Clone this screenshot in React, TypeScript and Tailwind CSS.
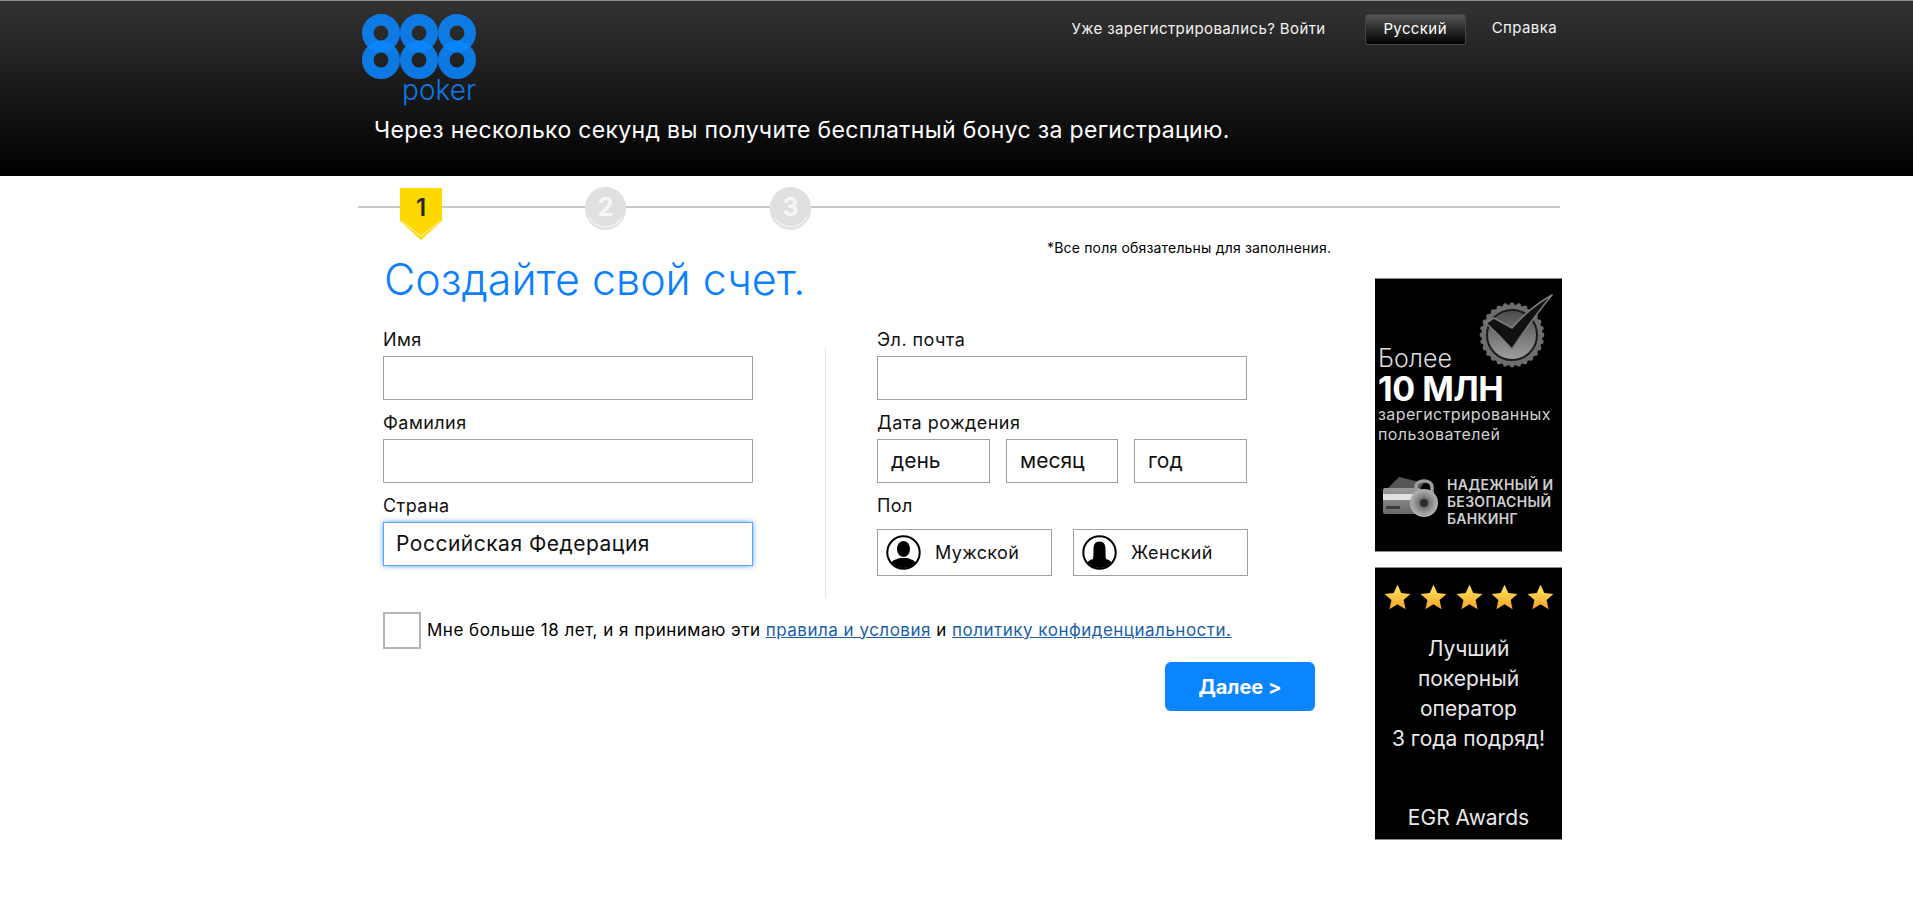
import type { ReactNode } from 'react'

function Logo() {
  const cols = [19, 57, 95]
  return (
    <div className="w-[114px] pt-[13px]">
      <svg width="114" height="65" viewBox="0 0 114 65" className="block">
        {[46, 19].map(cy => cols.map(cx => (
          <circle key={`${cx}-${cy}`} cx={cx} cy={cy} r="13.2" fill="none" stroke="#0a86ff" strokeOpacity="0.88" strokeWidth="11.6" />
        )))}
      </svg>
      <div className="-mt-[3px] text-right text-[28px] leading-[28px] font-light text-[#0b78e6]">poker</div>
    </div>
  )
}

function StepBadge() {
  return (
    <div className="relative w-[42px] h-[53px] flex justify-center pt-[6px] text-[24px] leading-[28px] font-semibold text-[#2a2a2a]">
      <svg width="42" height="53" viewBox="0 0 42 53" className="absolute left-0 top-0">
        <polygon points="0,0 42,0 42,33 21,52 0,33" fill="#ffd800" />
        <polyline points="1,33 21,48 41,33" fill="none" stroke="#ffec80" strokeWidth="1.4" />
      </svg>
      <span className="relative">1</span>
    </div>
  )
}

function StepCircle({ n }: { n: number }) {
  return (
    <div className="relative -mt-[1px] w-[41px] h-[43px] flex justify-center pt-[5px] text-[25px] leading-[30px] font-bold text-[#f6f6f6]">
      <svg width="41" height="43" viewBox="0 0 41 43" className="absolute left-0 top-0">
        <circle cx="20.5" cy="22.5" r="20.5" fill="#e4e4e4" />
        <circle cx="20.5" cy="20.5" r="20.5" fill="#e0e0e0" />
        <path d="M4 30 A19 19 0 0 0 37 30" fill="none" stroke="#f6f6f6" strokeWidth="1.2" />
      </svg>
      <span className="relative">{n}</span>
    </div>
  )
}

function Field({ label, children }: { label: string; children: ReactNode }) {
  return (
    <div className="mb-[10px]">
      <div className="h-[24px] mb-[5px] text-[18px] leading-[26px] tracking-[0.45px] text-[#111]">{label}</div>
      {children}
    </div>
  )
}

function TextInput() {
  return <input type="text" className="block w-[370px] h-[44px] border border-[#a0a0a0] bg-white outline-none" />
}

function DateBox({ w, text }: { w: string; text: string }) {
  return (
    <div className={`${w} h-[44px] border border-[#a0a0a0] pl-[13px] text-[21px] leading-[42px] text-[#111]`}>{text}</div>
  )
}

function Avatar({ female }: { female?: boolean }) {
  return (
    <svg width="35" height="35" viewBox="0 0 35 35" className="shrink-0">
      <defs>
        <clipPath id={female ? 'clipF' : 'clipM'}><circle cx="17.5" cy="17.5" r="15.5" /></clipPath>
      </defs>
      <circle cx="17.5" cy="17.5" r="16.2" fill="#fff" stroke="#000" strokeWidth="2" />
      <g clipPath={`url(#${female ? 'clipF' : 'clipM'})`}>
        <path d="M3 35 C3 26 9 24.5 14 23 L21 23 C26 24.5 32 26 32 35 Z" fill="#000" />
        {female
          ? <path d="M17.5 6.5 C13 6.5 11.5 10 11.5 14 C11.5 18 11.5 21 11 24 L24 24 C23.5 21 23.5 18 23.5 14 C23.5 10 22 6.5 17.5 6.5 Z" fill="#000" />
          : <ellipse cx="17.5" cy="14" rx="6.5" ry="8" fill="#000" />}
      </g>
    </svg>
  )
}

function GenderBox({ label, female }: { label: string; female?: boolean }) {
  return (
    <div className="w-[175px] h-[47px] border border-[#a0a0a0] flex items-center pl-[8px] gap-[14px] text-[18px] tracking-[0.35px] text-[#111]">
      <Avatar female={female} />
      <span>{label}</span>
    </div>
  )
}

function SealCheck() {
  const teeth = Array.from({ length: 28 }, (_, i) => {
    const a = (i / 28) * Math.PI * 2
    return <circle key={i} cx={33 + Math.cos(a) * 30} cy={43 + Math.sin(a) * 30} r="2.4" fill="#6e6e6e" />
  })
  return (
    <svg width="76" height="76" viewBox="0 0 76 76" className="shrink-0 self-start">
      <defs>
        <linearGradient id="sealFill" x1="0" y1="0" x2="0" y2="1">
          <stop offset="0" stopColor="#4a4a4a" />
          <stop offset="1" stopColor="#a0a0a0" />
        </linearGradient>
      </defs>
      {teeth}
      <circle cx="33" cy="43" r="30.5" fill="#6e6e6e" />
      <circle cx="33" cy="43" r="25" fill="url(#sealFill)" stroke="#1c1c1c" strokeWidth="2" />
      <path d="M7 31 L15 26 L33 36 Q50 16 73 3 Q54 26 33 57 Q20 43 7 31 Z" fill="#111" stroke="#7a7a7a" strokeWidth="1.6" strokeLinejoin="round" />
    </svg>
  )
}

function CardLock() {
  return (
    <svg width="58" height="42" viewBox="0 0 58 42" className="shrink-0">
      <defs>
        <linearGradient id="cardBody" x1="0" y1="0" x2="0" y2="1">
          <stop offset="0" stopColor="#9a9a9a" />
          <stop offset="1" stopColor="#6a6a6a" />
        </linearGradient>
        <radialGradient id="lockBody">
          <stop offset="0" stopColor="#444" />
          <stop offset="0.55" stopColor="#8a8a8a" />
          <stop offset="1" stopColor="#b4b4b4" />
        </radialGradient>
      </defs>
      <polygon points="6,12 17,1 42,7 34,18" fill="#555" />
      <rect x="1" y="12" width="38" height="26" rx="2" fill="url(#cardBody)" />
      <rect x="1" y="18" width="38" height="6" fill="#e0e0e0" />
      <rect x="4" y="30" width="14" height="3" fill="#3c3c3c" />
      <path d="M34 20 V11 C34 3 50 3 50 11 V20" fill="none" stroke="#9c9c9c" strokeWidth="3.5" />
      <circle cx="42" cy="27" r="14" fill="url(#lockBody)" />
      <circle cx="42" cy="27" r="4" fill="#2c2c2c" />
    </svg>
  )
}

function AdUsers() {
  return (
    <div className="w-[187px] h-[274px] bg-black border-t border-b border-[#8a8a8a] pt-[13px] pl-[3px] text-[#dcdcdc]">
      <div className="h-[81px] flex justify-between pr-[7px]">
        <div className="self-end text-[25px] leading-[30px] font-light">Более</div>
        <SealCheck />
      </div>
      <div className="text-[34px] leading-[31px] font-bold text-white tracking-[-0.5px]">10 МЛН</div>
      <div className="text-[16px] leading-[20px] tracking-[0.4px] text-[#d0d0d0] whitespace-nowrap">зарегистрированных</div>
      <div className="text-[16px] leading-[20px] tracking-[0.4px] text-[#d0d0d0] whitespace-nowrap">пользователей</div>
      <div className="mt-[32px] ml-[4px] flex items-start gap-[7px]">
        <CardLock />
        <div className="text-[14px] leading-[17px] tracking-[0.3px] font-semibold text-[#cfcfcf] whitespace-nowrap">
          <div>НАДЕЖНЫЙ И</div>
          <div>БЕЗОПАСНЫЙ</div>
          <div>БАНКИНГ</div>
        </div>
      </div>
    </div>
  )
}

function Star() {
  return (
    <svg width="27" height="26" viewBox="0 0 24 23">
      <defs>
        <linearGradient id="starFill" x1="0" y1="0" x2="0" y2="1">
          <stop offset="0" stopColor="#ffe566" />
          <stop offset="1" stopColor="#f5a623" />
        </linearGradient>
      </defs>
      <polygon points="12,0.5 15.4,8 23.5,8.8 17.4,14.2 19.2,22.3 12,18 4.8,22.3 6.6,14.2 0.5,8.8 8.6,8" fill="url(#starFill)" />
    </svg>
  )
}

function AdAwards() {
  return (
    <div className="w-[187px] h-[273px] bg-black border-t border-b border-[#8a8a8a] pt-[16px] text-center text-[21px] leading-[30px] text-[#e8e8e8]">
      <div className="flex justify-between pl-[9px] pr-[8px]">
        {[0, 1, 2, 3, 4].map(i => <Star key={i} />)}
      </div>
      <div className="mt-[24px]">
        <div>Лучший</div>
        <div>покерный</div>
        <div>оператор</div>
        <div>3 года подряд!</div>
      </div>
      <div className="mt-[49px]">EGR Awards</div>
    </div>
  )
}

export default function App() {
  return (
    <div className="min-h-[909px] bg-white font-['Inter','Noto_Sans',sans-serif]">
      <header className="h-[176px] border-t border-[#8a8a8a] bg-linear-to-b/srgb from-[#333333] to-black">
        <div className="ml-[358px] w-[1202px]">
          <div className="flex justify-between pl-[4px] pr-[3px]">
            <Logo />
            <nav className="flex items-start pt-[13px] text-[15px] tracking-[0.4px] text-[#f2f2f2]">
              <a className="h-[31px] leading-[29px] whitespace-nowrap">Уже зарегистрировались? Войти</a>
              <button className="ml-[39px] w-[101px] h-[31px] rounded-[3px] border border-[#444] bg-linear-to-b/srgb from-[#555555] to-black text-[15px] text-white">Русский</button>
              <a className="ml-[26px] h-[31px] leading-[27px]">Справка</a>
            </nav>
          </div>
          <p className="mt-[11px] pl-[16px] text-[23px] leading-[30px] tracking-[0.33px] text-white whitespace-nowrap">Через несколько секунд вы получите бесплатный бонус за регистрацию.</p>
        </div>
      </header>

      <main className="ml-[358px] w-[1202px]">
        <div className="flex items-start pt-[12px] h-[64px]">
          <div className="w-[42px] h-[2px] mt-[18px] bg-[#c8c8c8]" />
          <StepBadge />
          <div className="w-[143px] h-[2px] mt-[18px] bg-[#c8c8c8]" />
          <StepCircle n={2} />
          <div className="w-[144px] h-[2px] mt-[18px] bg-[#c8c8c8]" />
          <StepCircle n={3} />
          <div className="flex-1 h-[2px] mt-[18px] bg-[#c8c8c8]" />
        </div>

        <div className="flex">
          <div className="w-[957px] shrink-0">
            <div className="h-[16px] pl-[689px] text-[14px] leading-[16px] tracking-[0.18px] text-black whitespace-nowrap">*Все поля обязательны для заполнения.</div>
            <h1 className="pl-[26px] h-[46px] text-[43px] leading-[46px] font-light text-[#0a80ff] whitespace-nowrap">Создайте свой счет.</h1>

            <div className="mt-[25px] pl-[25px] flex items-start">
              <div className="w-[370px]">
                <Field label="Имя"><TextInput /></Field>
                <Field label="Фамилия"><TextInput /></Field>
                <Field label="Страна">
                  <div className="w-[370px] h-[44px] border border-[#5aa5f5] shadow-[0_0_5px_#5aa5f5] pl-[12px] text-[21px] leading-[41px] tracking-[0.5px] text-[#111]">Российская Федерация</div>
                </Field>
              </div>
              <div className="ml-[72px] mt-[21px] w-px h-[250px] bg-[#e5e5e5]" />
              <div className="ml-[51px] w-[371px]">
                <Field label="Эл. почта"><TextInput /></Field>
                <Field label="Дата рождения">
                  <div className="flex gap-[16px]">
                    <DateBox w="w-[113px]" text="день" />
                    <DateBox w="w-[112px]" text="месяц" />
                    <DateBox w="w-[113px]" text="год" />
                  </div>
                </Field>
                <Field label="Пол">
                  <div className="flex justify-between mt-[12px]">
                    <GenderBox label="Мужской" />
                    <GenderBox label="Женский" female />
                  </div>
                </Field>
              </div>
            </div>

            <div className="mt-[14px] pl-[25px] flex items-center gap-[6px]">
              <div className="w-[38px] h-[37px] border-2 border-[#b4b4b4] bg-white shrink-0" />
              <p className="text-[17px] tracking-[0.5px] text-black whitespace-nowrap">
                Мне больше 18 лет, и я принимаю эти <a className="text-[#1a5ea8] underline">правила и условия</a> и <a className="text-[#1a5ea8] underline">политику конфиденциальности.</a>
              </p>
            </div>

            <div className="mt-[13px] flex justify-end">
              <button className="w-[150px] h-[49px] rounded-[6px] bg-[#0a85ff] text-[20px] font-bold text-white">Далее &gt;</button>
            </div>
          </div>

          <aside className="ml-[60px] mt-[38px] shrink-0 flex flex-col gap-[15px]">
            <AdUsers />
            <AdAwards />
          </aside>
        </div>
      </main>
    </div>
  )
}
